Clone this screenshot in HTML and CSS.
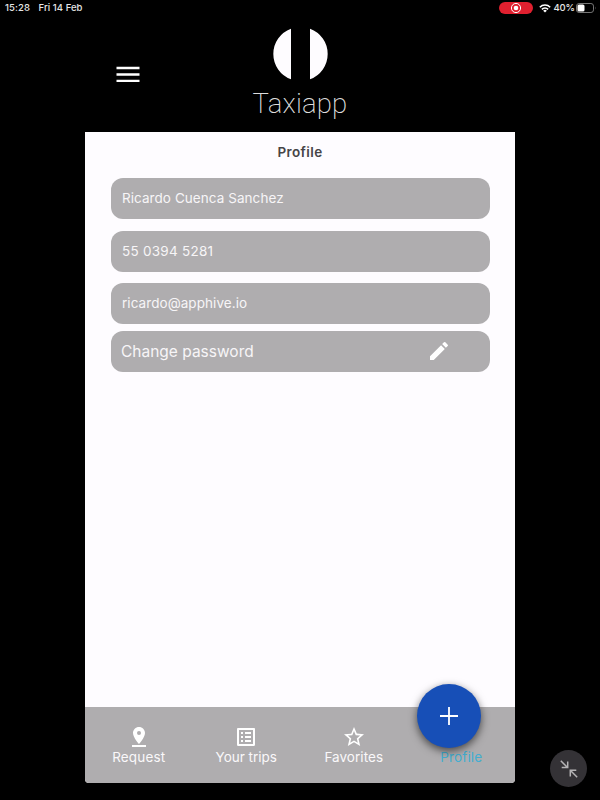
FILE: index.html
```html
<!DOCTYPE html>
<html lang="en">
<head>
<meta charset="utf-8">
<title>Taxiapp</title>
<link rel="stylesheet" href="styles.css">
</head>
<body>
<div class="screen">
  <div class="status">
    <span class="time">15:28</span>
    <span class="date">Fri 14 Feb</span>
    <span class="record"><svg width="12" height="12" viewBox="0 0 12 12"><circle cx="6" cy="6" r="4.6" fill="none" stroke="#fff" stroke-width="1"/><circle cx="6" cy="6" r="2.3" fill="#fff"/></svg></span>
    <svg class="wifi" width="12" height="9" viewBox="0 0 12 9"><g fill="none" stroke="#fff" stroke-width="1.6"><path d="M.8 3.2a7.4 7.4 0 0 1 10.4 0"/><path d="M2.9 5.4a4.4 4.4 0 0 1 6.2 0"/></g><path d="M4.2 6.7a2.6 2.6 0 0 1 3.6 0L6 8.6z" fill="#fff"/></svg>
    <span class="percent">40%</span>
    <svg class="battery" width="20" height="10" viewBox="0 0 20 10"><rect x=".5" y=".5" width="17" height="9" rx="2.6" fill="none" stroke="#777"/><rect x="1.5" y="1.5" width="7" height="7" rx="1.6" fill="#fff"/><path d="M19 3.4q1 1.6 0 3.2z" fill="#777"/></svg>
  </div>
  <header class="header">
    <svg class="menu" width="24" height="17" viewBox="0 0 24 17"><path d="M.5 2h23M.5 8.5h23M.5 14.8h23" stroke="#fff" stroke-width="2.3"/></svg>
    <div class="brand">
      <svg width="56" height="52" viewBox="0 0 56 52"><path d="M19 .8v50.4A26.8 26.8 0 0 1 19 .8zM38 .8v50.4A26.8 26.8 0 0 0 38 .8z" fill="#fefcff"/></svg>
      <div class="name">Taxiapp</div>
    </div>
  </header>
  <main class="panel">
    <h1>Profile</h1>
    <div class="fields">
      <div class="field">Ricardo Cuenca Sanchez</div>
      <div class="field phone">55 0394 5281</div>
      <div class="field email">ricardo@apphive.io</div>
      <div class="field change"><span>Change password</span>
        <svg width="24" height="24" viewBox="0 0 24 24" fill="#fff"><path d="M3 17.25V21h3.75L17.81 9.94l-3.75-3.75zM20.71 7.04a1 1 0 0 0 0-1.41l-2.34-2.34a1 1 0 0 0-1.41 0l-1.83 1.83 3.75 3.75z"/></svg>
      </div>
    </div>
    <nav class="nav">
      <div class="tab"><svg width="24" height="24" viewBox="0 0 24 24" fill="#fff"><path d="M18 8c0-3.31-2.69-6-6-6S6 4.69 6 8c0 4.5 6 11 6 11s6-6.5 6-11zm-8 0a2 2 0 1 1 4 0 2 2 0 0 1-4 0zM5 20v2h14v-2z"/></svg><span>Request</span></div>
      <div class="tab"><svg width="24" height="24" viewBox="0 0 24 24" fill="#fff"><path d="M19 5v14H5V5h14m1.1-2H3.9c-.5 0-.9.4-.9.9v16.2c0 .4.4.9.9.9h16.2c.4 0 .9-.5.9-.9V3.9c0-.5-.5-.9-.9-.9zM11 7h6v2h-6V7zm0 4h6v2h-6v-2zm0 4h6v2h-6zM7 7h2v2H7zm0 4h2v2H7zm0 4h2v2H7z"/></svg><span class="trips">Your trips</span></div>
      <div class="tab"><svg width="24" height="24" viewBox="0 0 24 24" fill="#fff"><path d="M22 9.24l-7.19-.62L12 2 9.19 8.63 2 9.24l5.46 4.73L5.82 21 12 17.27 18.18 21l-1.63-7.03L22 9.24zM12 15.4l-3.76 2.27 1-4.28-3.32-2.88 4.38-.38L12 6.1l1.71 4.04 4.38.38-3.32 2.88 1 4.28L12 15.4z"/></svg><span class="favorites">Favorites</span></div>
      <div class="tab active"><span class="icon-space"></span><span>Profile</span></div>
    </nav>
  </main>
  <div class="fab"><svg width="20" height="20" viewBox="0 0 20 20"><path d="M1 10h18M10 1v18" stroke="#fff" stroke-width="1.8"/></svg></div>
  <div class="shrink"><svg width="18" height="18" viewBox="0 0 18 18" fill="none" stroke="#b5b3b5" stroke-width="1.5"><path d="M.8.8 7.5 7.5M1.7 7.6h6V1.5M17.2 17.2l-6.7-6.7M16.3 10.3h-6v6.1"/></svg></div>
</div>
</body>
</html>
```
FILE: styles.css
```css
* { box-sizing: border-box; }
body { margin: 0; background: #000; font-family: Inter, "Liberation Sans", sans-serif; }
svg { display: block; flex: none; }
.screen { position: relative; width: 600px; height: 800px; overflow: hidden; background: #000; color: #fff; }
.status { display: flex; align-items: center; height: 16px; padding: 0 4px 0 5px; font-size: 9.5px; line-height: 16px; white-space: nowrap; color: #e6e6e6; }
.time { width: 33.5px; font-weight: 500; letter-spacing: .1px; }
.date { font-weight: 500; letter-spacing: .05px; }
.record { display: flex; align-items: center; justify-content: center; width: 34px; height: 12px; margin-left: auto; border-radius: 6px; background: #e0202f; }
.wifi { margin-left: 6px; }
.percent { width: 22px; margin-left: 2.5px; margin-right: .5px; font-weight: 500; letter-spacing: -.2px; }
.header { display: flex; justify-content: center; height: 116px; padding: 12px 0 0; }
.menu { width: 24px; margin: 38px 114px 0 0; }
.brand { width: 92px; margin-right: 138px; display: flex; flex-direction: column; align-items: center; }
.name { margin-top: 4px; font: 200 27.5px/40px Roboto, sans-serif; letter-spacing: .2px; white-space: nowrap; color: #ddd; }
.panel { display: flex; flex-direction: column; width: 430px; height: 650.5px; margin-left: 85px; overflow: hidden; background: #fefcff; border-radius: 0 0 4px 4px; }
h1 { height: 46px; margin: 0; padding-top: 10px; text-align: center; font-size: 13.5px; line-height: 20px; font-weight: 600; letter-spacing: .4px; color: #464547; }
.fields { display: flex; flex-direction: column; padding: 0 25.5px; flex: 1; }
.field { display: flex; align-items: center; height: 41px; margin-bottom: 11.7px; padding: 0 11.5px 1px; border-radius: 12px; background: #afadaf; color: #f7f5f7; font-size: 13.5px; letter-spacing: .06px; }
.phone { letter-spacing: .25px; }
.email { margin-bottom: 6.5px; }
.change { justify-content: space-between; padding: 0 38.5px 0 10.5px; font-size: 15.5px; letter-spacing: 0; }
.nav { display: flex; height: 75.5px; padding-top: 17.5px; background: #afadaf; }
.tab { display: flex; flex: 1; flex-direction: column; align-items: center; font-size: 13.5px; line-height: 16px; letter-spacing: .15px; white-space: nowrap; color: #faf8fa; }
.trips { letter-spacing: 0; }
.favorites { letter-spacing: .05px; }
.icon-space { height: 24px; }
.active { color: #42add0; }
.fab { position: absolute; left: 416.5px; top: 684px; display: flex; align-items: center; justify-content: center; width: 64px; height: 64px; border-radius: 50%; background: #174fb7; box-shadow: 0 3px 8px rgba(0,0,0,.6); }
.shrink { position: absolute; left: 550px; top: 750px; display: flex; align-items: center; justify-content: center; width: 37px; height: 37px; border-radius: 50%; background: #343236; }
```
